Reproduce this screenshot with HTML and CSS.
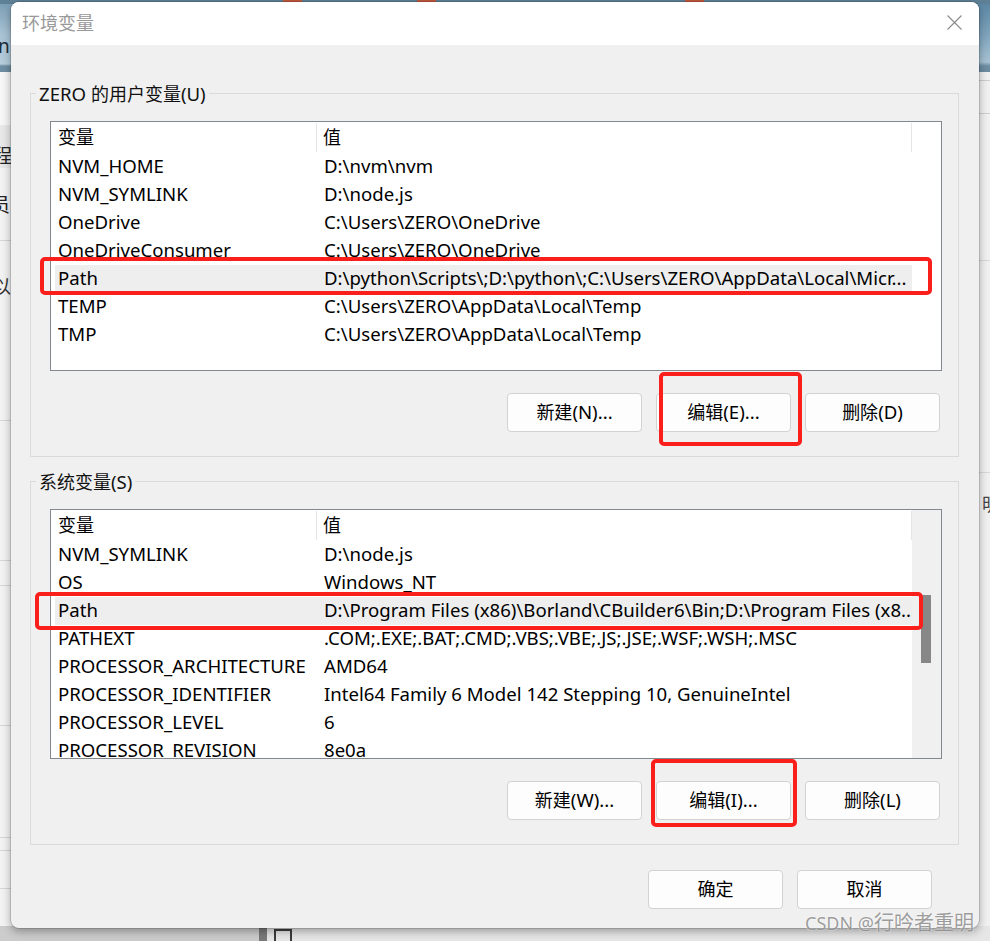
FILE: index.html
```html
<!DOCTYPE html>
<html lang="zh-CN">
<head>
<meta charset="utf-8">
<title>环境变量</title>
<link rel="stylesheet" href="styles.css">
</head>
<body>
<div class="desktop">
  <div class="bgwin bg-top">
    <i class="redchip c1"></i><i class="redchip c2"></i><i class="redchip c3"></i>
  </div>
  <div class="bgwin bg-left">
    <span class="frag f-n">n</span>
    <span class="frag f-1">程</span>
    <span class="frag f-2">员</span>
    <span class="frag f-3">以</span>
  </div>
  <div class="bgwin bg-right">
    <span class="frag f-r">明</span>
  </div>
  <div class="bgwin bg-bottom"><i class="taskbtn"></i></div>

  <div class="dialog">
    <div class="titlebar">
      <span class="title">环境变量</span>
      <svg class="close" width="15" height="15" viewBox="0 0 15 15"><path d="M0.5 0.5L14.5 14.5M14.5 0.5L0.5 14.5" stroke="#8a8a8a" stroke-width="1.1" fill="none"/></svg>
    </div>
    <div class="content">
      <div class="group">
        <div class="glabel">ZERO <span class="cjk">的用户变量</span>(U)</div>
        <div class="list">
          <div class="table">
            <div class="row head"><div class="c1"><span class="cjk">变量</span></div><div class="c2"><span class="cjk">值</span></div></div>
            <div class="row"><div class="c1">NVM_HOME</div><div class="c2">D:\nvm\nvm</div></div>
            <div class="row"><div class="c1">NVM_SYMLINK</div><div class="c2">D:\node.js</div></div>
            <div class="row"><div class="c1">OneDrive</div><div class="c2">C:\Users\ZERO\OneDrive</div></div>
            <div class="row"><div class="c1">OneDriveConsumer</div><div class="c2">C:\Users\ZERO\OneDrive</div></div>
            <div class="row sel"><div class="c1">Path</div><div class="c2">D:\python\Scripts\;D:\python\;C:\Users\ZERO\AppData\Local\Micr...</div></div>
            <div class="row"><div class="c1">TEMP</div><div class="c2">C:\Users\ZERO\AppData\Local\Temp</div></div>
            <div class="row"><div class="c1">TMP</div><div class="c2">C:\Users\ZERO\AppData\Local\Temp</div></div>
          </div>
          <div class="spare"></div>
        </div>
        <div class="btnrow">
          <button class="btn"><span class="cjk">新建</span>(N)...</button>
          <button class="btn"><span class="cjk">编辑</span>(E)...</button>
          <button class="btn"><span class="cjk">删除</span>(D)</button>
        </div>
      </div>

      <div class="group second">
        <div class="glabel"><span class="cjk">系统变量</span>(S)</div>
        <div class="list">
          <div class="table">
            <div class="row head"><div class="c1"><span class="cjk">变量</span></div><div class="c2"><span class="cjk">值</span></div></div>
            <div class="row"><div class="c1">NVM_SYMLINK</div><div class="c2">D:\node.js</div></div>
            <div class="row"><div class="c1">OS</div><div class="c2">Windows_NT</div></div>
            <div class="row sel"><div class="c1">Path</div><div class="c2">D:\Program Files (x86)\Borland\CBuilder6\Bin;D:\Program Files (x8...</div></div>
            <div class="row"><div class="c1">PATHEXT</div><div class="c2">.COM;.EXE;.BAT;.CMD;.VBS;.VBE;.JS;.JSE;.WSF;.WSH;.MSC</div></div>
            <div class="row"><div class="c1">PROCESSOR_ARCHITECTURE</div><div class="c2">AMD64</div></div>
            <div class="row"><div class="c1">PROCESSOR_IDENTIFIER</div><div class="c2">Intel64 Family 6 Model 142 Stepping 10, GenuineIntel</div></div>
            <div class="row"><div class="c1">PROCESSOR_LEVEL</div><div class="c2">6</div></div>
            <div class="row"><div class="c1">PROCESSOR_REVISION</div><div class="c2">8e0a</div></div>
          </div>
          <div class="scrollbar"><div class="thumb"></div></div>
        </div>
        <div class="btnrow">
          <button class="btn"><span class="cjk">新建</span>(W)...</button>
          <button class="btn"><span class="cjk">编辑</span>(I)...</button>
          <button class="btn"><span class="cjk">删除</span>(L)</button>
        </div>
      </div>

      <div class="footer">
        <button class="btn"><span class="cjk">确定</span></button>
        <button class="btn"><span class="cjk">取消</span></button>
      </div>
    </div>
  </div>

  <div class="mark m1"></div>
  <div class="mark m2"></div>
  <div class="mark m3"></div>
  <div class="mark m4"></div>

  <div class="watermark">CSDN @<span class="cjk">行吟者重明</span></div>
</div>
</body>
</html>
```

FILE: styles.css
```css
html, body {
  margin: 0;
  padding: 0;
}
body {
  width: 990px;
  height: 941px;
  overflow: hidden;
  font-family: "Noto Sans", "Noto Sans CJK SC", sans-serif;
  color: #000;
}
.desktop {
  position: relative;
  width: 990px;
  height: 941px;
  overflow: hidden;
  background: #e9e9e9;
}

/* ---------- background windows peeking out ---------- */
.bgwin { position: absolute; }
.bg-top {
  left: 0; top: 0; width: 990px; height: 6px;
  background: #5f8197;
}
.redchip { position: absolute; top: 0; height: 6px; background: #c2573f; }
.redchip.c1 { left: 283px; width: 19px; }
.redchip.c2 { left: 417px; width: 19px; }
.redchip.c3 { left: 685px; width: 19px; }

.bg-left {
  left: 0; top: 4px; width: 40px; height: 926px;
  overflow: hidden;
  background:
    linear-gradient(#d6d6d6, #d6d6d6) 0 236px / 100% 1px no-repeat,
    linear-gradient(#d6d6d6, #d6d6d6) 0 416px / 100% 1px no-repeat,
    linear-gradient(#d6d6d6, #d6d6d6) 0 556px / 100% 1px no-repeat,
    linear-gradient(#d6d6d6, #d6d6d6) 0 581px / 100% 1px no-repeat,
    linear-gradient(#d6d6d6, #d6d6d6) 0 721px / 100% 1px no-repeat,
    linear-gradient(#d6d6d6, #d6d6d6) 0 833px / 100% 1px no-repeat,
    linear-gradient(#d6d6d6, #d6d6d6) 0 846px / 100% 1px no-repeat,
    linear-gradient(#d6d6d6, #d6d6d6) 0 884px / 100% 1px no-repeat,
    linear-gradient(to bottom,
      #7d9fb6 0, #a9c3d5 30px, #b5cddc 60px,
      #6e8ea3 62px, #6e8ea3 68px,
      #f7f7f7 68px, #f7f7f7 121px,
      #e8e8e8 121px, #e8e8e8 164px,
      #f3f3f3 164px, #f3f3f3 100%);
}
.frag {
  position: absolute;
  font-family: "Noto Sans", "Noto Sans CJK SC", sans-serif;
  font-size: 19px;
  line-height: 20px;
  color: #222;
}
.f-n { left: -2px; top: 32px; color: #1e2c36; }
.f-1 { left: -7px; top: 142px; }
.f-2 { left: -9px; top: 191px; }
.f-3 { left: -8px; top: 273px; color: #333; }

.bg-right {
  left: 950px; top: 4px; width: 40px; height: 926px;
  overflow: hidden;
  background:
    linear-gradient(#cfcfcf, #cfcfcf) 0 76px / 100% 1px no-repeat,
    linear-gradient(#cfcfcf, #cfcfcf) 0 109px / 100% 1px no-repeat,
    linear-gradient(#d9d9d9, #d9d9d9) 0 256px / 100% 1px no-repeat,
    linear-gradient(#d9d9d9, #d9d9d9) 0 468px / 100% 1px no-repeat,
    linear-gradient(to bottom,
      #5d88a5 0, #7ea4bd 30px, #a7c2d4 58px,
      #6d8da2 62px, #6d8da2 68px,
      #f1f1f1 68px, #f1f1f1 100%);
}
.f-r { left: 32px; top: 490px; color: #444; font-size: 18px; }

.bg-bottom {
  left: 0; top: 926px; width: 990px; height: 15px;
  background: linear-gradient(to right,
    #cccccc 0, #cccccc 259px,
    #7a7a7a 259px, #7a7a7a 267px,
    #e6e6e6 267px, #e6e6e6 100%);
}
.taskbtn {
  position: absolute;
  left: 274px; top: 3px;
  width: 14px; height: 14px;
  border: 2px solid #3c3c3c;
}

/* ---------- dialog ---------- */
.dialog {
  position: absolute;
  left: 11px;
  top: 2px;
  width: 968px;
  height: 926px;
  background: #f0f0f0;
  border-radius: 8px;
  overflow: hidden;
  box-shadow: 0 0 0 1px rgba(0, 0, 0, 0.12), 0 3px 10px rgba(0, 0, 0, 0.35);
  display: flex;
  flex-direction: column;
}
.titlebar {
  height: 43px;
  flex: none;
  background: #fff;
  display: flex;
  align-items: center;
  justify-content: space-between;
  padding: 0 17px 0 11px;
}
.title {
  font-family: "Noto Sans CJK SC", sans-serif;
  font-size: 18px;
  line-height: 24px;
  color: #999;
  margin-top: -3px;
}
.close { display: block; margin-top: -2px; }

.content {
  flex: 1;
  display: flex;
  flex-direction: column;
  padding: 0 20px 0 19px;
}
.cjk {
  font-family: "Noto Sans CJK SC", sans-serif;
  font-size: 18px;
}

.group {
  margin-top: 48px;
  border: 1px solid #dadada;
  padding: 0 16px 24px 19px;
  width: 892px;
}
.group.second { margin-top: 24px; }
.glabel {
  display: table;
  height: 24px;
  line-height: 24px;
  margin: -13px 0 0 -14px;
  padding: 0 3px;
  background: #f0f0f0;
  font-size: 18.6px;
  color: #111;
  white-space: nowrap;
}

.list {
  margin-top: 15px;
  width: 890px;
  height: 248px;
  border: 1px solid #828790;
  background: #fff;
  display: flex;
  overflow: hidden;
}
.table {
  width: 861px;
  flex: none;
}
.row {
  display: grid;
  grid-template-columns: 266px 595px;
  height: 28px;
  line-height: 26px;
  font-size: 18.6px;
  white-space: nowrap;
}
.row .c1, .row .c2 {
  padding-left: 7px;
  overflow: hidden;
}
.row .c2 { padding-right: 6px; }
.row.head {
  height: 31px;
  line-height: 26px;
}
.row.head .c1, .row.head .c2 {
  border-right: 1px solid #e5e5e5;
  height: 29px;
  margin-top: 1px;
}
.row.head .c2 { padding-left: 6px; }
.row.sel {
  background: linear-gradient(to right, transparent 4px, #eeeeee 4px);
}
.spare { flex: 1; }

.scrollbar {
  flex: 1;
  background: #f0f0f0;
}
.thumb {
  margin: 85px 0 0 9px;
  width: 10px;
  height: 68px;
  background: #878787;
}

.btnrow {
  display: flex;
  justify-content: flex-end;
  gap: 14px;
  margin-top: 22px;
  padding-right: 2px;
}
.btn {
  width: 135px;
  height: 39px;
  padding: 0 0 3px;
  border: 1px solid #d2d2d2;
  border-radius: 4px;
  background: #fdfdfd;
  font-family: "Noto Sans", "Noto Sans CJK SC", sans-serif;
  font-size: 18.6px;
  color: #000;
  line-height: 34px;
  box-sizing: border-box;
}

.footer {
  display: flex;
  justify-content: flex-end;
  gap: 14px;
  margin-top: 25px;
  padding-right: 27px;
}

/* ---------- red annotation frames ---------- */
.mark {
  position: absolute;
  border: 4px solid #fb1f1c;
  border-radius: 5px;
  box-sizing: border-box;
}
.m1 { left: 40px; top: 257px; width: 892px; height: 38px; }
.m2 { left: 659px; top: 372px; width: 143px; height: 74px; }
.m3 { left: 35px; top: 592px; width: 888px; height: 38px; }
.m4 { left: 651px; top: 759px; width: 146px; height: 68px; }

.watermark {
  position: absolute;
  left: 805px;
  top: 909px;
  font-size: 18px;
  line-height: 26px;
  color: rgba(120, 120, 120, 0.72);
  text-shadow: 0 0 2px rgba(255, 255, 255, 0.9);
  white-space: nowrap;
}
.watermark .cjk { font-size: 20px; }
```
